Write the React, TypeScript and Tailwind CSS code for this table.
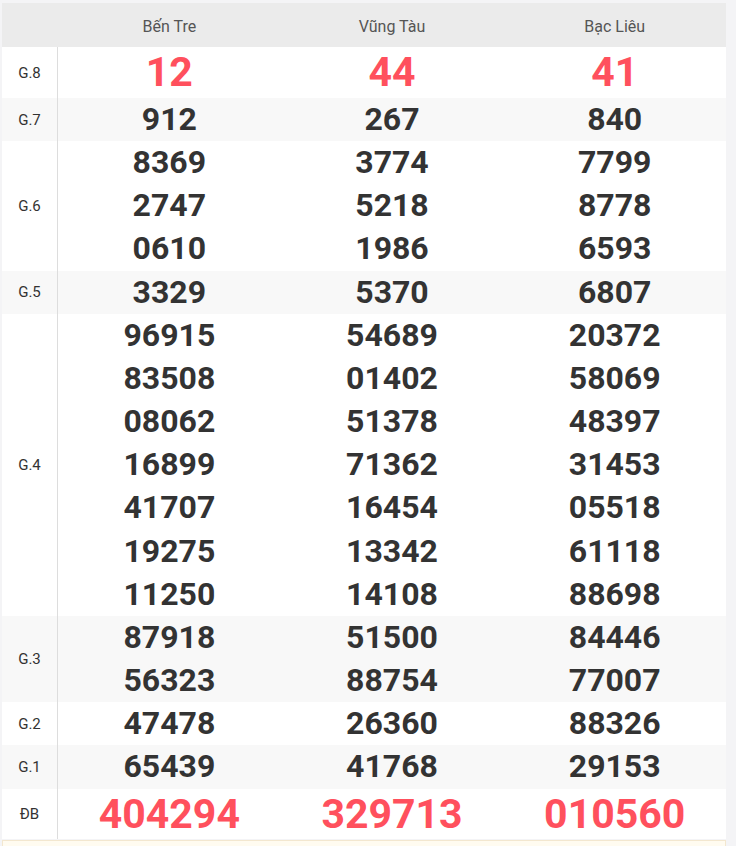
const provinces = ["Bến Tre", "Vũng Tàu", "Bạc Liêu"]

type Prize = {
  label: string
  values: string[][]
  special?: boolean
  striped?: boolean
}

const prizes: Prize[] = [
  { label: "G.8", values: [["12"], ["44"], ["41"]], special: true },
  { label: "G.7", values: [["912"], ["267"], ["840"]], striped: true },
  {
    label: "G.6",
    values: [
      ["8369", "2747", "0610"],
      ["3774", "5218", "1986"],
      ["7799", "8778", "6593"],
    ],
  },
  { label: "G.5", values: [["3329"], ["5370"], ["6807"]], striped: true },
  {
    label: "G.4",
    values: [
      ["96915", "83508", "08062", "16899", "41707", "19275", "11250"],
      ["54689", "01402", "51378", "71362", "16454", "13342", "14108"],
      ["20372", "58069", "48397", "31453", "05518", "61118", "88698"],
    ],
  },
  {
    label: "G.3",
    values: [
      ["87918", "56323"],
      ["51500", "88754"],
      ["84446", "77007"],
    ],
    striped: true,
  },
  { label: "G.2", values: [["47478"], ["26360"], ["88326"]] },
  { label: "G.1", values: [["65439"], ["41768"], ["29153"]], striped: true },
  { label: "ĐB", values: [["404294"], ["329713"], ["010560"]], special: true },
]

export default function App() {
  return (
    <div className="min-h-[846px] w-[736px] bg-[#f4f4f6] pt-[3px] pl-[2px] font-['Roboto',sans-serif]">
      <div className="w-[724px] bg-white">
        {/* header */}
        <div className="flex h-[44px] items-center bg-[#ebebeb] pt-[3px] text-[16px] text-[#555]">
          <div className="w-[56px]" />
          {provinces.map((p) => (
            <div key={p} className="flex-1 text-center">
              {p}
            </div>
          ))}
        </div>

        {prizes.map((prize) => (
          <div
            key={prize.label}
            className={`flex ${prize.striped ? "bg-[#f8f8f8]" : "bg-white"}`}
          >
            <div className="flex w-[56px] items-center justify-center border-r border-[#dddddd] pt-px text-[15px] text-[#333]">
              {prize.label}
            </div>
            {prize.values.map((col, i) => (
              <div key={i} className="flex flex-1 flex-col items-center">
                {col.map((v) =>
                  prize.special ? (
                    <div
                      key={v}
                      className={`text-[41px] font-bold text-[#ff505d] ${prize.label === "G.8" ? "leading-[51px]" : "leading-[50px]"}`}
                    >
                      {v}
                    </div>
                  ) : (
                    <div
                      key={v}
                      className="text-[32px] font-bold leading-[43.15px] text-[#333]"
                    >
                      {v}
                    </div>
                  )
                )}
              </div>
            ))}
          </div>
        ))}
      </div>
      <div className="mt-px h-[20px] w-[724px] border border-[#f3e7cf] bg-[#fffbf0]" />
    </div>
  )
}
